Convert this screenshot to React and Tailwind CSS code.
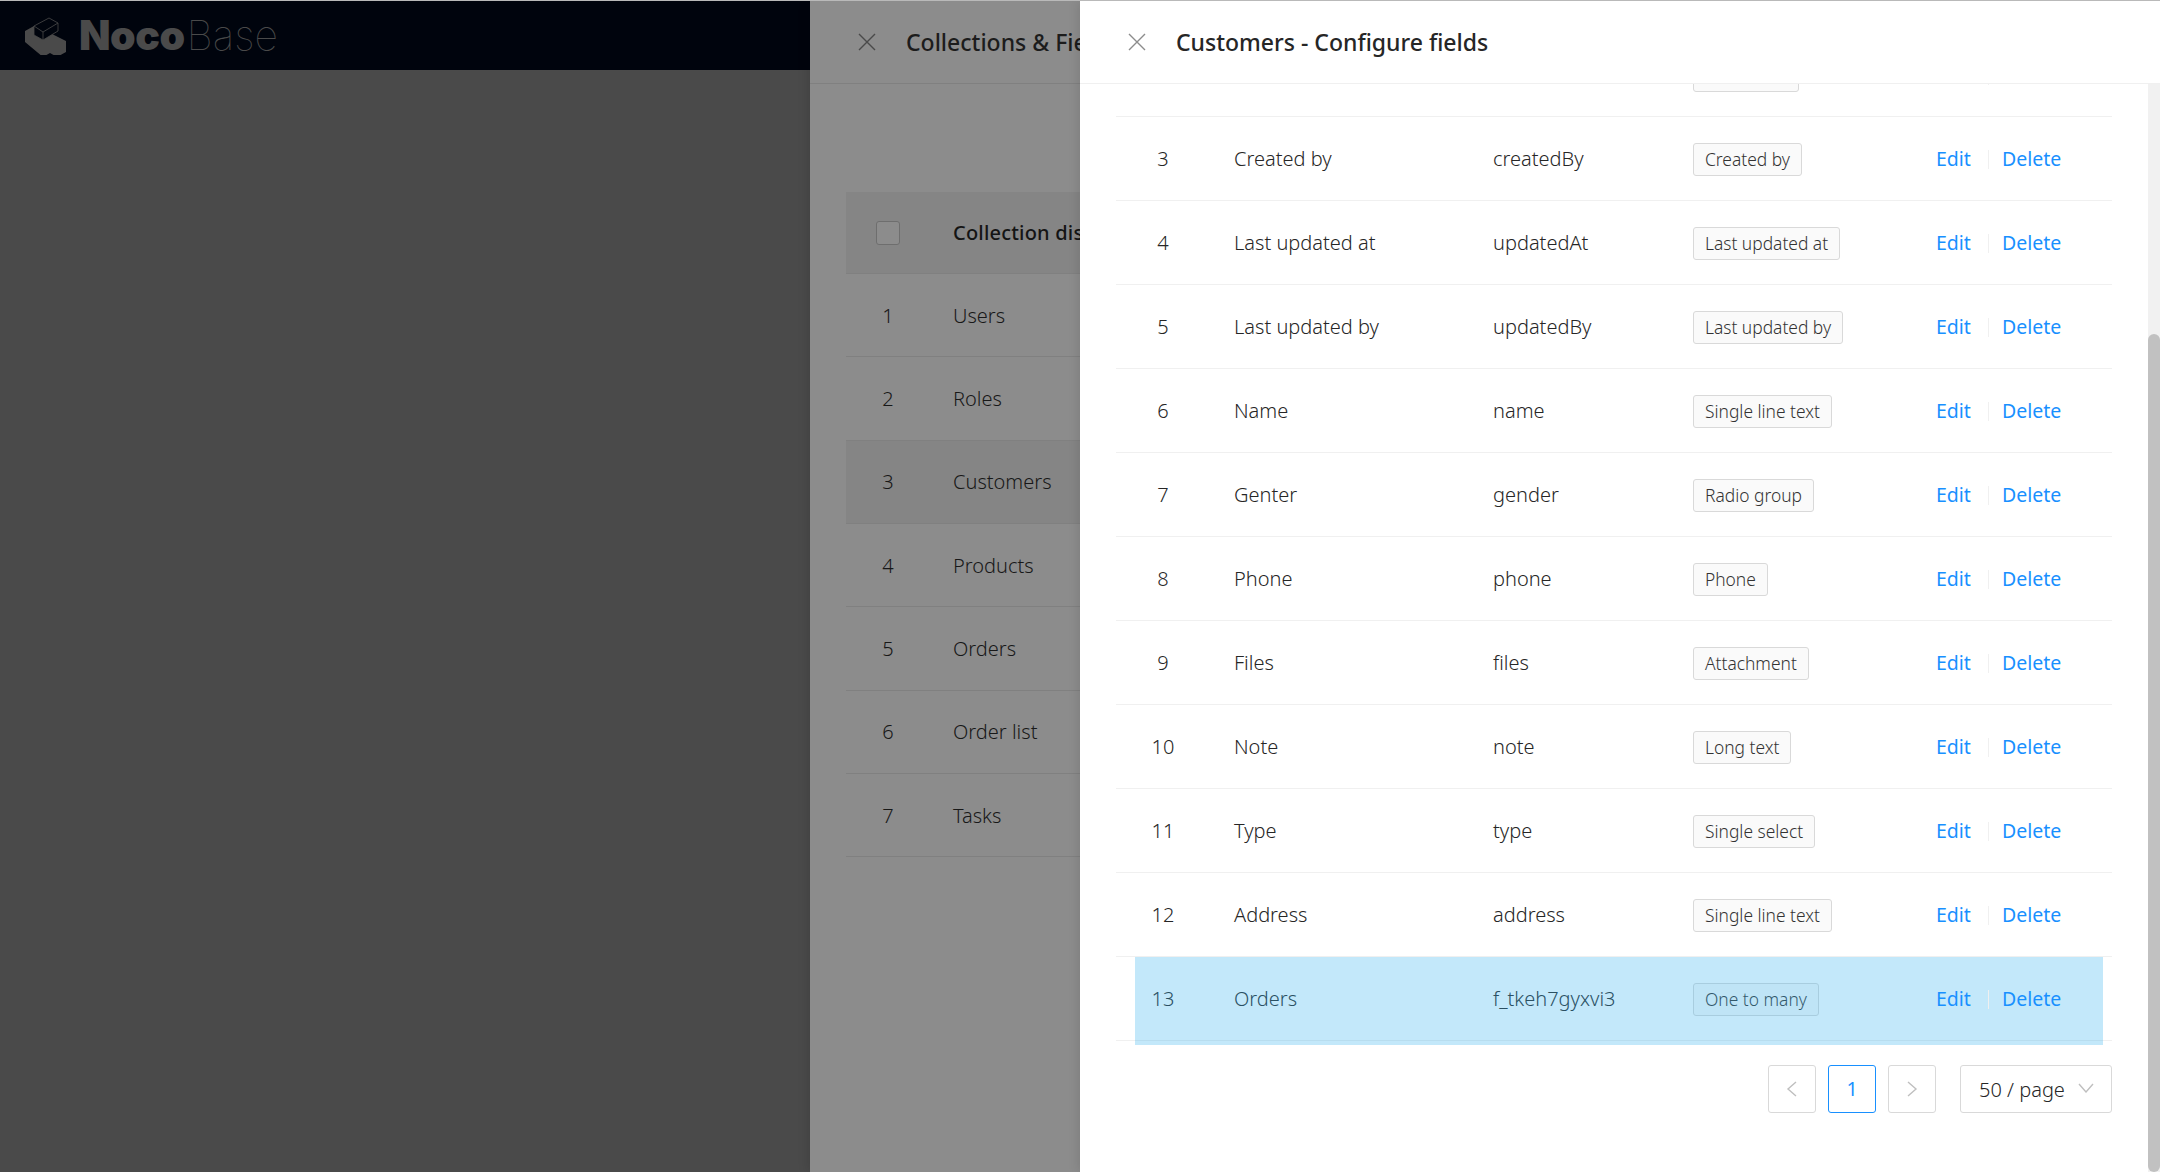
const FONT = "font-['Noto_Sans','Open_Sans',sans-serif]";

const FIELDS = [
  [2, "Created at", "createdAt", "Created at"],
  [3, "Created by", "createdBy", "Created by"],
  [4, "Last updated at", "updatedAt", "Last updated at"],
  [5, "Last updated by", "updatedBy", "Last updated by"],
  [6, "Name", "name", "Single line text"],
  [7, "Genter", "gender", "Radio group"],
  [8, "Phone", "phone", "Phone"],
  [9, "Files", "files", "Attachment"],
  [10, "Note", "note", "Long text"],
  [11, "Type", "type", "Single select"],
  [12, "Address", "address", "Single line text"],
  [13, "Orders", "f_tkeh7gyxvi3", "One to many"],
];

const COLLECTIONS = ["Users", "Roles", "Customers", "Products", "Orders", "Order list", "Tasks"];

function CloseIcon({ className }) {
  return (
    <svg viewBox="0 0 18 18" className={`w-[18px] h-[18px] shrink-0 ${className}`} fill="none" stroke="currentColor" strokeWidth="1.4">
      <path d="M1 1l16 16M17 1L1 17" />
    </svg>
  );
}

function Logo() {
  return (
    <div className="flex items-center h-[69px] pl-6 shrink-0 bg-[#00040d] text-[#4a4a4a]">
      <svg viewBox="0 0 44 38" className="w-[44px] h-[38px] shrink-0">
        <path d="M1 14l9-5 0 8 9 5 9-5 4 2 10 5v11l-9 5-7-4-7 4L1 25z" fill="currentColor" />
        <path d="M10 9l15-8 9 5v8l-15 9-9-5zM10 9l9 6v8M19 15l15-9" fill="#00040d" stroke="currentColor" strokeWidth="0.8" />
      </svg>
      <span className="ml-[11px] font-['Inter',sans-serif] font-black text-[41px] leading-none tracking-[-0.5px]">Noco</span>
      <span className="ml-[2px] font-['Inter',sans-serif] font-thin text-[41px] leading-none">Base</span>
    </div>
  );
}

function Backdrop() {
  return (
    <div className="w-[810px] shrink-0 flex flex-col bg-[#4a4a4a]">
      <Logo />
    </div>
  );
}

function CollectionsDrawer() {
  return (
    <div className="relative z-10 w-[270px] shrink-0 overflow-hidden bg-[#8c8c8c] shadow-[-2px_0_10px_rgba(0,0,0,0.12)]">
      <div className="flex items-center h-[83px] w-[800px] pl-12 pt-px border-b border-[#808080] text-[#2a2a2a]">
        <CloseIcon className="text-[#4a4a4a] -mt-px" />
        <span className="ml-[30px] text-[23px] font-medium whitespace-nowrap text-[#1c1c1c]">Collections &amp; Fields</span>
      </div>
      <div className="ml-9 mt-[108px] w-[800px] text-[20px] font-light text-[#181818]">
        <div className="flex items-center h-[82px] pt-px bg-[#858585] border-b border-[#808080]">
          <span className="w-[84px] flex justify-center">
            <span className="w-6 h-6 -mt-px rounded-[3px] border border-[#6e6e6e] bg-[#8c8c8c]"></span>
          </span>
          <span className="pl-[23px] font-medium tracking-[0.2px] whitespace-nowrap text-[#141414]">Collection display name</span>
        </div>
        {COLLECTIONS.map((name, i) => (
          <div
            key={name}
            className={`flex items-center h-[83.33px] pt-px border-b border-[#808080] ${name === "Customers" ? "bg-[#858585]" : ""}`}
          >
            <span className="w-[84px] text-center">{i + 1}</span>
            <span className="pl-[23px]">{name}</span>
          </div>
        ))}
      </div>
    </div>
  );
}

function FieldRow({ row, first }) {
  const [index, title, name, type] = row;
  const highlighted = index === 13;
  return (
    <div
      className={`relative grid grid-cols-[94px_259px_200px_243px_200px] items-center h-[84px] pt-px shrink-0 border-b border-[#f0f0f0] text-[20px] font-light text-[#262626] ${first ? "-mt-[51px]" : ""}`}
    >
      <span className="text-center">{index}</span>
      <span className="pl-6">{title}</span>
      <span className="pl-6">{name}</span>
      <span className="pl-6">
        <span className="inline-flex items-center h-[33px] px-[11px] rounded-[3px] border border-[#d9d9d9] bg-[#fafafa] text-[17.4px] text-[#333]">
          {type}
        </span>
      </span>
      <span className="relative z-10 pl-6 flex items-center text-[19.5px] font-normal text-[#1890ff]">
        <span>Edit</span>
        <span className="w-px h-[19px] bg-[#f0f0f0] ml-[17px] mr-[13px]"></span>
        <span>Delete</span>
      </span>
      {highlighted && (
        <div className="absolute left-[19px] right-[9px] top-0 h-[88px] bg-[rgba(55,178,238,0.3)]"></div>
      )}
    </div>
  );
}

function PageButton({ children, active }) {
  return (
    <div
      className={`flex items-center justify-center w-12 h-12 rounded-[3px] border ${active ? "border-[#1890ff] text-[#1890ff]" : "border-[#d9d9d9] text-[#bfbfbf]"}`}
    >
      {children}
    </div>
  );
}

function Pagination() {
  return (
    <div className="flex justify-end items-center mt-6 text-[19.5px]">
      <PageButton>
        <svg viewBox="0 0 12 16" className="w-3 h-4" fill="none" stroke="currentColor" strokeWidth="1.4"><path d="M10 1L2 8l8 7" /></svg>
      </PageButton>
      <div className="ml-3"><PageButton active>1</PageButton></div>
      <div className="ml-3">
        <PageButton>
          <svg viewBox="0 0 12 16" className="w-3 h-4" fill="none" stroke="currentColor" strokeWidth="1.4"><path d="M2 1l8 7-8 7" /></svg>
        </PageButton>
      </div>
      <div className="ml-6 flex items-center justify-between w-[152px] h-12 pl-[18px] pr-[17px] pt-0.5 rounded-[3px] border border-[#d9d9d9] text-[20px] font-light text-[#262626]">
        <span>50 / page</span>
        <svg viewBox="0 0 16 10" className="w-4 h-[10px] -mt-1 text-[#bfbfbf]" fill="none" stroke="currentColor" strokeWidth="1.4"><path d="M1 1l7 8 7-8" /></svg>
      </div>
    </div>
  );
}

function FieldsDrawer() {
  return (
    <div className="relative z-20 flex-1 min-w-0 flex flex-col bg-white shadow-[-2px_0_10px_rgba(0,0,0,0.1)]">
      <div className="flex items-center h-[83px] shrink-0 pl-12 pt-px border-b border-[#f0f0f0]">
        <CloseIcon className="text-[#8c8c8c] -mt-px" />
        <span className="ml-[30px] text-[23px] font-medium text-[#262626]">Customers - Configure fields</span>
      </div>
      <div className="flex-1 min-h-0 flex">
        <div className="flex-1 min-w-0 overflow-hidden">
          <div className="flex flex-col pl-9 pr-9">
            {FIELDS.map((row, i) => (
              <FieldRow key={row[0]} row={row} first={i === 0} />
            ))}
            <Pagination />
          </div>
        </div>
        <div className="w-3 shrink-0 bg-[#f1f1f1] pt-[250px]">
          <div className="h-full rounded-md bg-[#c1c1c1]"></div>
        </div>
      </div>
    </div>
  );
}

export default function App() {
  return (
    <div className={`flex w-full h-screen overflow-hidden border-t border-[#b9b9b9] ${FONT}`}>
      <Backdrop />
      <CollectionsDrawer />
      <FieldsDrawer />
    </div>
  );
}
